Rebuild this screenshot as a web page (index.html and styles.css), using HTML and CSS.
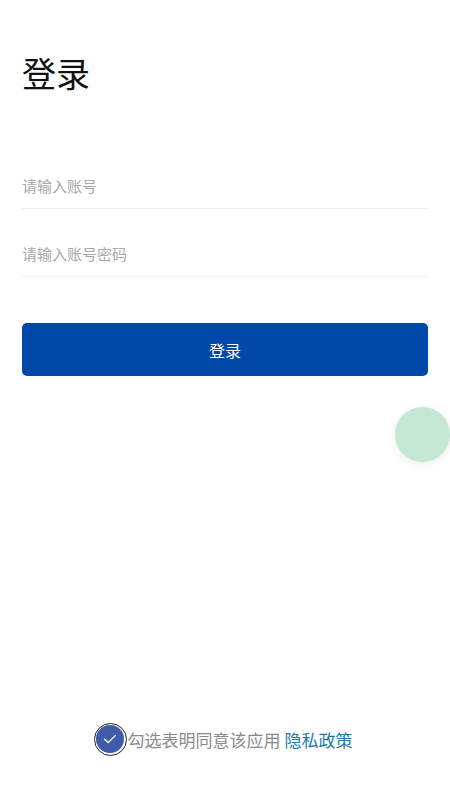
FILE: index.html
```html
<!DOCTYPE html>
<html lang="zh-CN">
<head>
<meta charset="utf-8">
<title>登录</title>
<link rel="stylesheet" href="styles.css">
</head>
<body>
<div class="page">
  <h1 class="title">登录</h1>
  <div class="field"><span class="placeholder">请输入账号</span></div>
  <div class="field field-second"><span class="placeholder">请输入账号密码</span></div>
  <button class="btn">登录</button>
  <div class="agree">
    <span class="check">
      <span class="check-inner">
        <svg width="14" height="10" viewBox="0 0 14 10"><path d="M1.5 5.2 L5.2 8.6 L12.5 1.4" fill="none" stroke="#fff" stroke-width="1.3" stroke-linecap="round" stroke-linejoin="round"/></svg>
      </span>
    </span>
    <span class="agree-text">勾选表明同意该应用</span>
    <span class="agree-link">隐私政策</span>
  </div>
</div>
<div class="float-btn"></div>
</body>
</html>
```

FILE: styles.css
```css
html, body {
  margin: 0;
  padding: 0;
  background: #fff;
}
body {
  font-family: "Noto Sans CJK SC", "Noto Sans", sans-serif;
  width: 450px;
  height: 800px;
  position: relative;
  overflow: hidden;
}
.page {
  box-sizing: border-box;
  height: 800px;
  padding: 0 22px;
  display: flex;
  flex-direction: column;
}
.title {
  margin: 53px 0 0 0;
  font-size: 34px;
  line-height: 40px;
  font-weight: 400;
  color: #111;
}
.field {
  margin-top: 69px;
  height: 46px;
  line-height: 46px;
  border-bottom: 1px solid #eeeeee;
}
.field-second {
  margin-top: 21px;
}
.placeholder {
  font-size: 15px;
  color: #a9a9a9;
}
.btn {
  margin-top: 46px;
  height: 53px;
  border: none;
  border-radius: 5px;
  background: #0049a8;
  color: #fff;
  font-family: inherit;
  font-size: 16px;
  padding: 0;
  width: 100%;
}
.agree {
  margin-top: auto;
  margin-bottom: 44px;
  display: flex;
  align-items: center;
  justify-content: center;
  height: 34px;
  padding-right: 4px;
}
.check {
  box-sizing: border-box;
  width: 33px;
  height: 33px;
  border-radius: 50%;
  border: 1.5px solid #222;
  padding: 1.5px;
  display: flex;
  margin-right: 1px;
}
.check-inner {
  flex: 1;
  border-radius: 50%;
  background: #3f5ca8;
  display: flex;
  align-items: center;
  justify-content: center;
}
.agree-text {
  font-size: 17px;
  color: #8a8a8a;
}
.agree-link {
  font-size: 17px;
  color: #1d7aa6;
  margin-left: 4px;
}
.float-btn {
  position: absolute;
  left: 395px;
  top: 407px;
  width: 55px;
  height: 55px;
  border-radius: 50%;
  background: #c5e8d5;
  box-shadow: 0 2px 8px rgba(0, 0, 0, 0.08);
}
```
